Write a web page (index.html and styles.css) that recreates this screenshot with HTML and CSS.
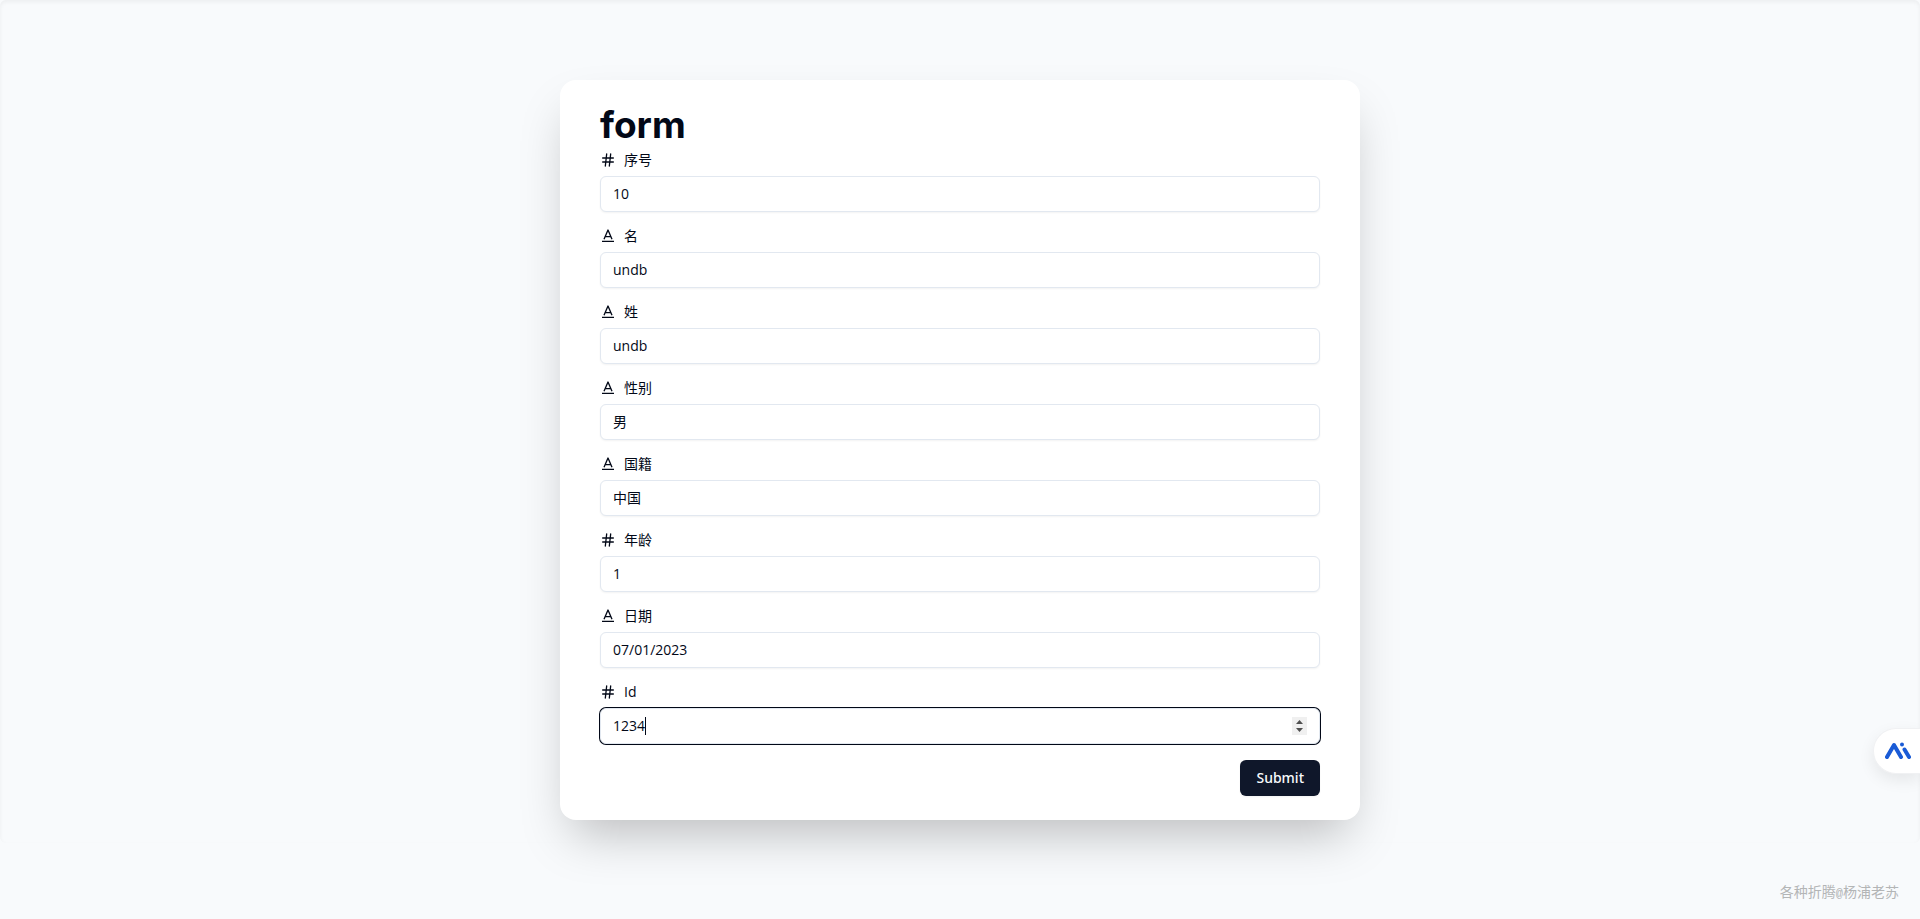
FILE: index.html
```html
<!DOCTYPE html>
<html lang="zh-CN">
<head>
<meta charset="utf-8">
<title>form</title>
<link rel="stylesheet" href="styles.css">
</head>
<body>
<svg class="sprite" aria-hidden="true">
  <symbol id="i-hash" viewBox="0 0 24 24"><path d="M4 9h16M4 15h16M10 3 8 21M16 3l-2 18"/></symbol>
  <symbol id="i-text" viewBox="0 0 24 24"><path stroke-linecap="butt" d="M3 20h18M6 17 12 3l6 14M8 13h8"/></symbol>
</svg>
<main class="stage">
  <form class="card">
    <h1 class="title">form</h1>
    <div class="fields">
      <div class="field">
        <label class="label" for="f1"><svg class="icon"><use href="#i-hash"/></svg>序号</label>
        <input class="input" id="f1" type="number" value="10">
      </div>
      <div class="field">
        <label class="label" for="f2"><svg class="icon"><use href="#i-text"/></svg>名</label>
        <input class="input" id="f2" type="text" value="undb">
      </div>
      <div class="field">
        <label class="label" for="f3"><svg class="icon"><use href="#i-text"/></svg>姓</label>
        <input class="input" id="f3" type="text" value="undb">
      </div>
      <div class="field">
        <label class="label" for="f4"><svg class="icon"><use href="#i-text"/></svg>性别</label>
        <input class="input" id="f4" type="text" value="男">
      </div>
      <div class="field">
        <label class="label" for="f5"><svg class="icon"><use href="#i-text"/></svg>国籍</label>
        <input class="input" id="f5" type="text" value="中国">
      </div>
      <div class="field">
        <label class="label" for="f6"><svg class="icon"><use href="#i-hash"/></svg>年龄</label>
        <input class="input" id="f6" type="number" value="1">
      </div>
      <div class="field">
        <label class="label" for="f7"><svg class="icon"><use href="#i-text"/></svg>日期</label>
        <input class="input" id="f7" type="text" value="07/01/2023">
      </div>
      <div class="field">
        <label class="label" for="f8"><svg class="icon"><use href="#i-hash"/></svg>Id</label>
        <div class="control">
          <input class="input input-active" id="f8" type="number" value="1234">
          <span class="caret"></span>
          <svg class="spinner" viewBox="0 0 15 18" aria-hidden="true"><path d="M4 7h7L7.500 3zM4 11h7l-3.500 4z"/></svg>
        </div>
      </div>
    </div>
    <div class="actions"><button class="submit" type="submit">Submit</button></div>
  </form>
</main>
<footer class="credit">各种折腾<span class="at">@</span>杨浦老苏</footer>
<button class="assistant" type="button" aria-label="AI">
  <svg class="assistant-logo" viewBox="0 0 26 17"><path d="M2 15 9 3l7 12M19.500 7.500 24 15"/><circle cx="17" cy="2.500" r="2"/></svg>
</button>
</body>
</html>
```
FILE: styles.css
```css
* { box-sizing: border-box; }
body {
  margin: 0;
  min-height: 100vh;
  display: flex;
  flex-direction: column;
  background: #f8fafc;
  color: #020817;
  font-family: "Open Sans", "Noto Sans CJK SC", sans-serif;
  font-size: 14px;
}
.sprite { display: none; }
.stage {
  flex: 1;
  padding: 80px 24px 23px;
  border-radius: 6px;
  box-shadow: inset 0 2px 4px rgba(0, 0, 0, 0.05);
}
.card {
  max-width: 800px;
  margin: 0 auto;
  padding: 24px 40px;
  border-radius: 16px;
  background: #fff;
  box-shadow: 0 25px 50px -12px rgba(0, 0, 0, 0.25);
}
.title {
  margin: 0 0 6px;
  font-family: Inter, sans-serif;
  font-size: 37px;
  line-height: 42px;
  font-weight: 700;
}
.fields { display: flex; flex-direction: column; gap: 16px; }
.field { display: flex; flex-direction: column; gap: 8px; }
.label {
  display: flex;
  align-items: center;
  gap: 8px;
  height: 16px;
  line-height: 16px;
}
.icon {
  width: 16px;
  height: 16px;
  fill: none;
  stroke: currentColor;
  stroke-width: 2;
  stroke-linecap: round;
  stroke-linejoin: round;
}
.control { position: relative; display: flex; }
.input {
  width: 100%;
  height: 36px;
  padding: 3px 12px 5px;
  border: 1px solid #e2e8f0;
  border-radius: 6px;
  background: #fff;
  color: inherit;
  font: inherit;
  box-shadow: 0 1px 2px rgba(0, 0, 0, 0.05);
}
.input:focus, .input-active {
  outline: none;
  box-shadow: 0 0 0 1px #020817, 0 1px 2px rgba(0, 0, 0, 0.05);
}
.input-active::-webkit-inner-spin-button { opacity: 0; }
.caret {
  position: absolute;
  left: 45px;
  top: 9px;
  width: 1px;
  height: 18px;
  background: #020817;
}
.spinner {
  position: absolute;
  right: 13px;
  top: 9px;
  width: 15px;
  height: 18px;
  background: #f0f0f0;
  fill: #505050;
  pointer-events: none;
}
.actions { display: flex; justify-content: flex-end; margin-top: 16px; }
.submit {
  height: 36px;
  padding: 8px 16px;
  border: 0;
  border-radius: 6px;
  background: #0f172a;
  color: #f8fafc;
  font-family: "Noto Sans", sans-serif;
  font-size: 14px;
  font-weight: 500;
  line-height: 20px;
  box-shadow: 0 1px 2px rgba(0, 0, 0, 0.05);
}
.credit {
  height: 76px;
  padding: 39px 21px 0;
  text-align: right;
  line-height: 20px;
  color: #b3b5b6;
}
.at { font-family: "Liberation Mono", monospace; font-size: 12px; }
.assistant {
  position: fixed;
  right: 0;
  top: 728px;
  display: flex;
  align-items: center;
  width: 47px;
  height: 46px;
  padding: 0 0 1px 11px;
  border: 1px solid #f0f1f3;
  border-right: 0;
  border-radius: 23px 0 0 23px;
  background: #fff;
  box-shadow: 0 6px 16px rgba(0, 0, 0, 0.08);
}
.assistant-logo {
  width: 26px;
  height: 17px;
  fill: none;
  stroke: #1a5bd6;
  stroke-width: 4;
  stroke-linecap: round;
  stroke-linejoin: round;
}
.assistant-logo circle { fill: #1a5bd6; stroke: none; }
```
